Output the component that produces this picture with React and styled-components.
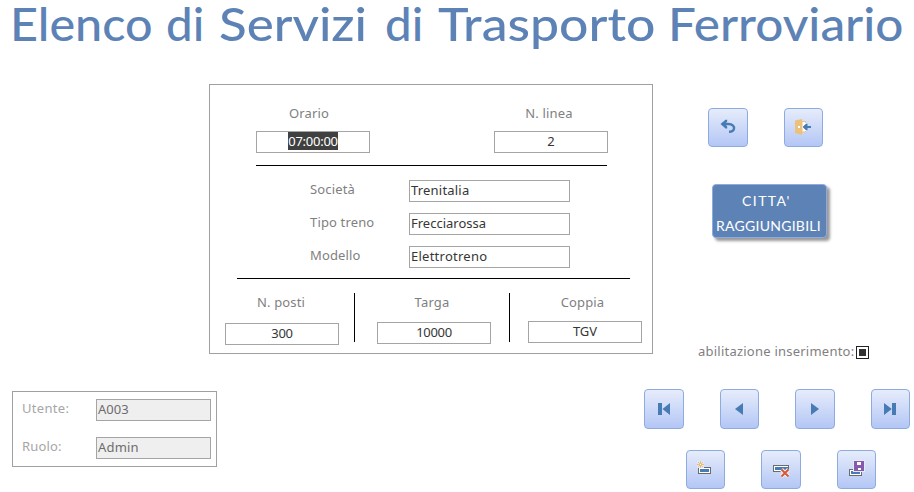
import React from "react";
import styled, { createGlobalStyle } from "styled-components";

const Global = createGlobalStyle`
  *, *::before, *::after { box-sizing: border-box; }
  body { margin: 0; background: #fff; font-family: "Noto Sans", "Open Sans", sans-serif; font-size: 13px; line-height: 20px; }
`;

const Page = styled.main`
  width: 914px;
  height: 492px;
  display: flex;
  flex-direction: column;
`;

const Title = styled.h1`
  display: flex;
  margin: 0;
  height: 84px;
  padding-left: 10px;
  flex: none;
  font: 500 46px/47px Lato, sans-serif;
  color: #5d83b6;
`;

const Word = styled.span`
  flex: none;
  width: ${(p) => p.$width}px;
  transform: scaleX(${(p) => p.$stretch});
  transform-origin: left;
  white-space: nowrap;
`;

const Middle = styled.div`
  display: flex;
  height: 305px;
  flex: none;
  padding-left: 209px;
`;

const Panel = styled.section`
  width: 444px;
  height: 270px;
  border: 1px solid #a0a0a0;
`;

const Label = styled.label`
  color: ${(p) => (p.$faint ? "#a6a6a6" : "#7f7f7f")};
  letter-spacing: ${(p) => p.$spacing ?? 0.15}px;
  white-space: nowrap;
`;

const Field = styled.div`
  width: ${(p) => p.$width}px;
  height: 22px;
  border: 1px solid #a5a5a5;
  padding: 0 1px;
  line-height: 19px;
  text-align: ${(p) => (p.$center ? "center" : "left")};
  color: ${(p) => (p.$disabled ? "#6d6d6d" : "#363636")};
  background: ${(p) => (p.$disabled ? "#efefef" : "#fff")};
  letter-spacing: ${(p) => p.$spacing ?? 0}px;
`;

const Selected = styled.span`
  display: inline-block;
  height: 18px;
  line-height: 19px;
  background: #404040;
  color: #fff;
  vertical-align: top;
`;

const TopFields = styled.div`
  display: flex;
  justify-content: space-between;
  width: 352px;
  margin: 18px 0 0 46px;
`;

const Stack = styled.div`
  display: flex;
  flex-direction: column;
  width: 114px;
`;

const StackLabel = styled(Label)`
  width: ${(p) => p.$width}px;
  height: ${(p) => p.$height}px;
  text-align: center;
`;

const Divider = styled.hr`
  width: ${(p) => p.$width}px;
  height: 1px;
  border: 0;
  background: #000;
  margin: ${(p) => p.$margin};
`;

const TrainFields = styled.div`
  display: grid;
  grid-template-columns: 99px 161px;
  row-gap: 11px;
  margin-left: 100px;
  ${Label} { line-height: 18px; }
`;

const BottomFields = styled.div`
  display: flex;
  margin: 14px 0 0 15px;
  ${Label} { line-height: 18px; }
`;

const Rule = styled.span`
  width: 1px;
  height: 49px;
  background: #000;
  margin: 0 ${(p) => p.$right}px 0 ${(p) => p.$left}px;
`;

const Side = styled.aside`
  padding: 24px 0 0 45px;
`;

const Actions = styled.div`
  display: flex;
  gap: 36px;
  padding-left: 10px;
`;

const IconButton = styled.button`
  width: ${(p) => p.$width ?? 40}px;
  height: ${(p) => p.$height ?? 40}px;
  flex: none;
  padding: 0;
  overflow: hidden;
  border: 1px solid #8eabdf;
  border-radius: 4px;
  background: linear-gradient(#e6ecfb, #b3c6f5);
  svg { display: block; margin: -1px; }
`;

const CityButton = styled.button`
  display: block;
  width: 115px;
  height: 54px;
  margin: 37px 0 0 14px;
  padding: 3px 0 0;
  border: 1px solid #8eabdf;
  border-radius: 4px;
  background: #5d83b6;
  box-shadow: 3px 3px 3px #999;
  color: #fff;
  font: 400 14px/25px Lato, sans-serif;
  white-space: nowrap;
`;

const CityLine = styled.span`
  display: block;
  height: 25px;
  padding-right: ${(p) => p.$right}px;
  letter-spacing: ${(p) => p.$spacing}px;
`;

const EnableRow = styled.div`
  display: flex;
  margin-top: 103px;
  gap: 1px;
`;

const EnableLabel = styled(Label)`
  width: 157px;
`;

const Checkbox = styled.span`
  display: grid;
  place-items: center;
  width: 13px;
  height: 13px;
  margin-top: 5px;
  border: 1px solid #222;
  &::after { content: ""; width: 7px; height: 7px; background: #333; }
`;

const Footer = styled.footer`
  display: flex;
  padding-left: 12px;
`;

const UserPanel = styled.section`
  display: grid;
  grid-template-columns: 74px 115px;
  grid-auto-rows: 22px;
  row-gap: 16px;
  width: 205px;
  height: 76px;
  margin-top: 2px;
  padding: 7px 0 0 9px;
  border: 1px solid #a0a0a0;
  ${Label} { line-height: 19px; }
`;

const Navigation = styled.nav`
  margin-left: 427px;
`;

const ButtonRow = styled.div`
  display: flex;
  gap: 36px;
  padding-left: ${(p) => p.$left ?? 0}px;

  & + & { margin-top: 21px; }
`;

const Icon = ({ children, crisp }) => (
  <svg width="40" height="40" viewBox="0 0 40 40" fill="#467cb3" shapeRendering={crisp ? "crispEdges" : "auto"}>
    {children}
  </svg>
);

const words = [
  ["Elenco", 156, 1.055],
  ["di", 53, 1.03],
  ["Servizi", 166, 1.11],
  ["di", 53, 1.03],
  ["Trasporto", 230, 1.125],
  ["Ferroviario", 230, 1.075],
];

const trainRows = [
  ["Società", "Trenitalia", 0.2],
  ["Tipo treno", "Frecciarossa", 0],
  ["Modello", "Elettrotreno", 0.25],
];

export default function App() {
  return (
    <Page>
      <Global />
      <Title>
        {words.map(([text, width, stretch], i) => (
          <Word key={i} $width={width} $stretch={stretch}>{text}</Word>
        ))}
      </Title>
      <Middle>
        <Panel>
          <TopFields>
            <Stack>
              <StackLabel $width={106} $height={28}>Orario</StackLabel>
              <Field $width={114} $center $spacing={-0.25}><Selected>07:00:00</Selected></Field>
            </Stack>
            <Stack>
              <StackLabel $width={110} $height={28} $spacing={0.2}>N. linea</StackLabel>
              <Field $width={114} $center>2</Field>
            </Stack>
          </TopFields>
          <Divider $width={351} $margin="12px 0 14px 46px" />
          <TrainFields>
            {trainRows.map(([label, value, spacing]) => (
              <React.Fragment key={label}>
                <Label>{label}</Label>
                <Field $width={161} $spacing={spacing}>{value}</Field>
              </React.Fragment>
            ))}
          </TrainFields>
          <Divider $width={393} $margin="10px 0 0 27px" />
          <BottomFields>
            <Stack>
              <StackLabel $width={112} $height={30}>N. posti</StackLabel>
              <Field $width={114} $center $spacing={-0.3}>300</Field>
            </Stack>
            <Rule $left={15} $right={22} />
            <Stack>
              <StackLabel $width={110} $height={29}>Targa</StackLabel>
              <Field $width={114} $center $spacing={-0.3}>10000</Field>
            </Stack>
            <Rule $left={18} $right={18} />
            <Stack>
              <StackLabel $width={109} $height={28}>Coppia</StackLabel>
              <Field $width={114} $center>TGV</Field>
            </Stack>
          </BottomFields>
        </Panel>
        <Side>
          <Actions>
            <IconButton $height={39} aria-label="Indietro">
              <Icon>
                <path d="M14 16H20.5C24.5 16 26.6 18.5 26 20.8C25.5 22.9 24 23.8 21 23.8" fill="none" stroke="#467cb3" strokeWidth="2.4" />
                <path d="M12.5 16L17.5 11.8H19.2V13.5L17 16L19.2 18.5V20.4H17.5Z" />
              </Icon>
            </IconButton>
            <IconButton $width={39} $height={39} aria-label="Esci">
              <Icon>
                <path d="M18 13.5H21.5V24H18Z" fill="#fff" stroke="#ebc17b" />
                <path d="M11 12.5L18 11V27L11 25Z" fill="#ebc17b" />
                <rect x="14" y="18" width="2" height="2" fill="#fff" />
                <path d="M18 19L20.5 15H22.5V23H20.5Z" fill="#fff" />
                <path d="M18.5 19L22 15.7H23.5V18H27V20H23.5V22.3H22Z" />
              </Icon>
            </IconButton>
          </Actions>
          <CityButton>
            <CityLine $spacing={1.4} $right={6}>CITTA'</CityLine>
            <CityLine $spacing={0.25} $right={2}>RAGGIUNGIBILI</CityLine>
          </CityButton>
          <EnableRow>
            <EnableLabel $spacing={0.23}>abilitazione inserimento:</EnableLabel>
            <Checkbox role="checkbox" aria-checked="mixed" />
          </EnableRow>
        </Side>
      </Middle>
      <Footer>
        <UserPanel>
          <Label $faint $spacing={0.3}>Utente:</Label>
          <Field $width={115} $disabled>A003</Field>
          <Label $faint>Ruolo:</Label>
          <Field $width={115} $disabled $spacing={0.2}>Admin</Field>
        </UserPanel>
        <Navigation>
          <ButtonRow>
            <IconButton aria-label="Primo">
              <Icon><path d="M14 14H18V26H14ZM18.5 20L26 14V26Z" /></Icon>
            </IconButton>
            <IconButton $width={39} aria-label="Precedente">
              <Icon><path d="M15 20L23 14V26Z" /></Icon>
            </IconButton>
            <IconButton aria-label="Successivo">
              <Icon><path d="M16 14L24 20L16 26Z" /></Icon>
            </IconButton>
            <IconButton $width={39} aria-label="Ultimo">
              <Icon><path d="M13 14L20.8 20L13 26ZM21 14H25V26H21Z" /></Icon>
            </IconButton>
          </ButtonRow>
          <ButtonRow $left={42}>
            <IconButton $width={39} $height={39} aria-label="Nuovo">
              <Icon crisp>
                <path d="M12 17H25V24H12Z" fill="#6b6b6b" />
                <path d="M13 18H24V23H13Z" fill="#fff" />
                <path d="M14 19H23V22H14Z" />
                <path d="M11 11H18V18H11Z" fill="#dfe7fa" />
                <path d="M13 13h3v3h-3ZM14 11h1v2h-1ZM14 16h1v2h-1ZM11 14h2v1h-2ZM16 14h2v1h-2ZM12 12h1v1h-1ZM16 12h1v1h-1ZM12 16h1v1h-1ZM16 16h1v1h-1Z" fill="#edbd70" />
                <path d="M14 14h1v1h-1Z" fill="#fff" />
              </Icon>
            </IconButton>
            <IconButton $height={39} aria-label="Elimina">
              <Icon>
                <path d="M12 15H28V22H12Z" fill="#6b6b6b" />
                <path d="M13 16H27V21H13Z" fill="#fff" />
                <path d="M14 17H27V20H14Z" />
                <path d="M20.5 19.5L27.5 26.5M27.5 19.5L20.5 26.5" stroke="#edf1fc" strokeWidth="4" />
                <path d="M20.5 19.5L27.5 26.5M27.5 19.5L20.5 26.5" stroke="#d95735" strokeWidth="2" />
              </Icon>
            </IconButton>
            <IconButton $width={39} $height={39} aria-label="Salva">
              <Icon crisp>
                <path d="M12 19H25V26H12Z" fill="#6b6b6b" />
                <path d="M13 20H24V25H13Z" fill="#fff" />
                <path d="M14 21H23V24H14Z" />
                <path d="M16 10H28V22H16Z" fill="#e4eafa" />
                <path d="M17 11H27V21H17Z" fill="#8659ad" />
                <path d="M20 12H24V15H20ZM21 18H24V20H21Z" fill="#fff" />
              </Icon>
            </IconButton>
          </ButtonRow>
        </Navigation>
      </Footer>
    </Page>
  );
}
